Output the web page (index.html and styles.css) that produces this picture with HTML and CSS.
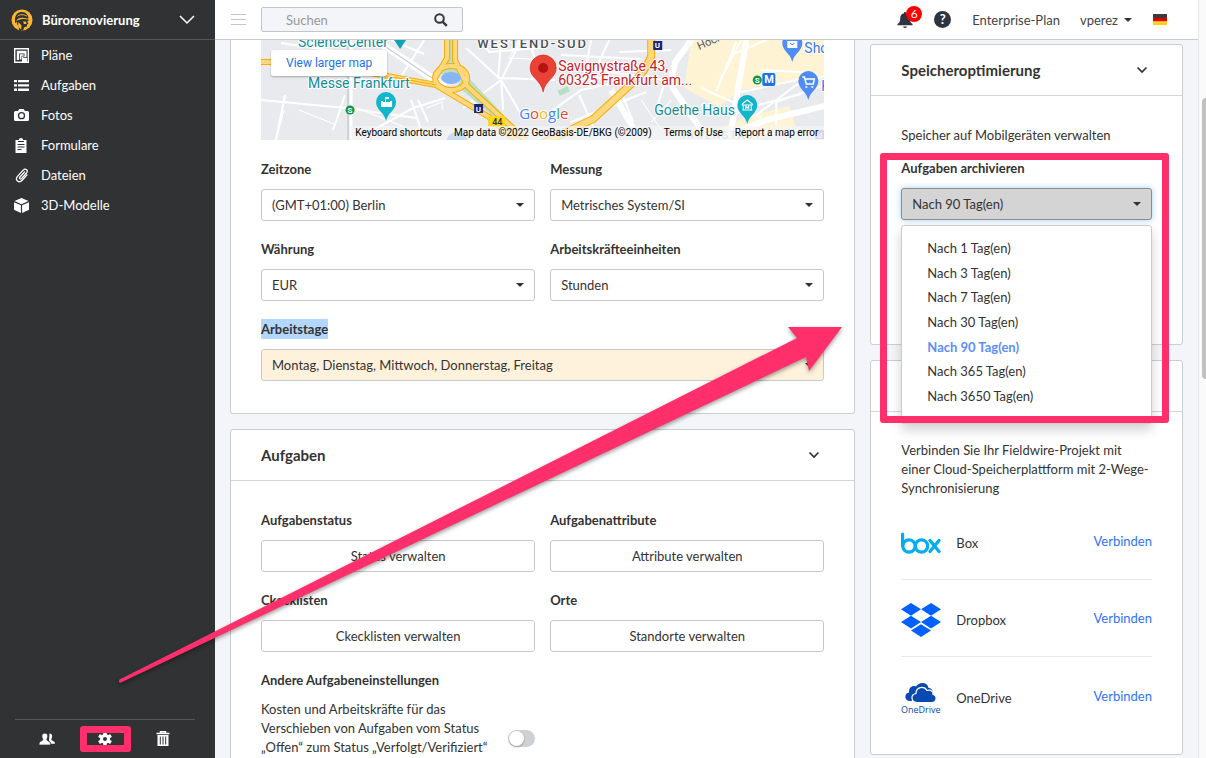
FILE: index.html
```html
<!DOCTYPE html>
<html lang="de">
<head>
  <meta charset="UTF-8" />
  <meta name="viewport" content="width=device-width, initial-scale=1.0" />
  <title>Bürorenovierung – Einstellungen</title>
  <link rel="stylesheet" href="styles.css">
</head>
<body>
  <aside class="sidebar">
    <button class="project" type="button">
      <svg width="22" height="22" viewBox="0 0 22 22"><circle cx="11" cy="11" r="10.500" fill="#fbb731"/><path d="M4 11c0-5.500 3-8 7-8s6.500 3 6.500 6.500H16C12 8 8 8.500 6 10.500l-.5 3L4 14z" fill="#313234"/><path d="M6.500 7.200C9 5.200 13 5.200 16 7.200" stroke="#fbb731" fill="none"/><path d="M6 11.500c3-1.500 7-2 11.500-1v1.500h-1.200l1 3-1.300.5v2l-2.500.5-1.500 3.500H8c.5-4-2-5-2-8z" fill="#313234"/><path d="M7.500 13l3 3.500-.3 4L7 17.500zM12 12.500h3l.5 2.500h-2.500z" fill="#fbb731"/></svg>
      <span>Bürorenovierung</span>
      <svg class="project-arrow" width="16" height="10" viewBox="0 0 16 10"><path d="M1 1l7 7 7-7" fill="none" stroke="#fff" stroke-width="1.500"/></svg>
    </button>
    <nav>
      <ul>
        <li><a href="#plaene"><svg width="15" height="15" viewBox="0 0 15 15"><path d="M.7.700h13.600v13.600H.7z" fill="none" stroke="#fff" stroke-width="1.400"/><path d="M2.800 2.800h9.700v6.400H9.200V14H8V8.500h2.500V5.500H5V12H2.800z" fill="#fff"/><path d="M5.800 6.300h3.900v1.500H7.500v3.700H5.800z" fill="#fff"/><path d="M9 10h4v4H9z" fill="#fff"/></svg>Pläne</a></li>
        <li><a href="#aufgaben"><svg width="15" height="15" viewBox="0 0 15 15"><path d="M0 2h3v2.300H0zM0 6.300h3v2.300H0zM0 10.600h3V13H0zM4 2h11v2.300H4zM4 6.300h11v2.300H4zM4 10.600h11V13H4z" fill="#fff"/></svg>Aufgaben</a></li>
        <li><a href="#fotos"><svg width="15" height="15" viewBox="0 0 15 15"><path d="M1.500 3H4l1.300-2h4.400L11 3h2.500Q15 3 15 4.500v7q0 1.500-1.500 1.500h-12Q0 13 0 11.500v-7Q0 3 1.500 3z" fill="#fff"/><circle cx="7.500" cy="7.700" r="3" fill="none" stroke="#313234" stroke-width="1.300"/></svg>Fotos</a></li>
        <li><a href="#formulare"><svg width="15" height="15" viewBox="0 0 15 15"><path d="M1.500 2h3.300Q5 0 7 0t2.200 2h3.300v13h-11z" fill="#fff"/><path d="M4 3.500h6M3.500 6.500h7M3.500 9h7M3.500 11.500h4" stroke="#313234" stroke-width="1.100"/></svg>Formulare</a></li>
        <li><a href="#dateien"><svg width="15" height="15" viewBox="0 0 15 15"><path d="M10.500 4L5.800 9.200c-1 1.200.6 2.500 1.700 1.400l5-5.600c2.200-2.700-1-5.300-3.400-2.900L3.500 8.300c-3 3.700 1.400 7.400 4.700 4l4.800-5.400" fill="none" stroke="#fff" stroke-width="1.300" stroke-linecap="round"/></svg>Dateien</a></li>
        <li><a href="#modelle"><svg width="15" height="15" viewBox="0 0 15 15"><path d="M7.500 0l7 3-7 3.200L.5 3zM0 4.200l6.900 3V15L0 11.800zM15 4.200l-6.900 3V15l6.900-3.200z" fill="#fff"/></svg>3D-Modelle</a></li>
      </ul>
    </nav>
    <div class="sidebar-tools">
      <button type="button" aria-label="Personen"><svg width="16" height="16" viewBox="0 0 16 16" fill="#fff"><path d="M10.500 2.500c3 0 3 3 2.200 4.800-.8 1.500-.3 2 .8 2.500 1.700.8 2.500 1.500 2.500 3h-4l-2-3.500z"/><path d="M5.800 2.200c3.200 0 3.300 3.200 2.300 5.200-.6 1.300-.2 1.900.8 2.400 1.900.9 2.700 1.800 2.700 4.200H0c0-2.400.8-3.300 2.700-4.200 1-.5 1.400-1.100.8-2.400-1-2-.9-5.200 2.300-5.200z" stroke="#313234" stroke-width=".7"/></svg></button>
      <button type="button" aria-label="Einstellungen"><svg width="14" height="14" viewBox="0 0 14 14"><circle cx="7" cy="7" r="3.500" fill="none" stroke="#fff" stroke-width="3"/><path d="M7 0v3.500M7 10.500V14M1 3.500l3 1.700M10 8.800l3 1.700M1 10.500l3-1.700M10 5.200l3-1.700" stroke="#fff" stroke-width="3.400"/></svg></button>
      <button type="button" aria-label="Papierkorb"><svg width="14" height="16" viewBox="0 0 14 16"><path d="M1.500 4h11v11h-11z" fill="#fff"/><path d="M.5 2.500h13M4.500 2V.8h5V2" fill="none" stroke="#fff" stroke-width="1.500"/><path d="M4.300 5.500v8M7 5.500v8M9.700 5.500v8" stroke="#313234" stroke-width="1"/></svg></button>
    </div>
  </aside>

  <div class="page">
    <header class="topbar">
      <button class="burger" type="button" aria-label="Menü"><svg width="15" height="13" viewBox="0 0 15 13"><path d="M0 1.500h15M0 6.500h15M0 11.500h15" stroke="#c4c4c4"/></svg></button>
      <form class="search">
        <input type="text" placeholder="Suchen" aria-label="Suchen" />
        <button type="submit" aria-label="Suche starten"><svg width="14" height="14" viewBox="0 0 14 14"><circle cx="5.500" cy="5.500" r="4.300" fill="none" stroke="#35373a" stroke-width="2"/><path d="M8.800 8.800l4 4" stroke="#35373a" stroke-width="2.400"/></svg></button>
      </form>
      <div class="account">
        <button class="bell" type="button" aria-label="Benachrichtigungen"><svg width="16" height="18" viewBox="0 0 16 18"><path d="M8 1c.8 0 1 .5 1 1.200 3 .6 3.800 2.700 3.800 5.300 0 3 .7 4.300 2.700 5.500v1.300H.5V13c2-1.200 2.700-2.500 2.700-5.500C3.200 4.900 4 2.800 7 2.200 7 1.500 7.200 1 8 1zM6 15.500h4Q9.500 17 8 17t-2-1.500z" fill="#2e3440"/></svg><span class="badge">6</span></button>
        <button class="help" type="button">?</button>
        <a class="plan" href="#plan">Enterprise-Plan</a>
        <button class="user" type="button">vperez</button>
        <button class="lang" type="button" aria-label="Deutsch"><svg width="14" height="11" viewBox="0 0 14 11"><path d="M0 0h14v4H0z" fill="#3b3b3b"/><path d="M0 4h14v3.500H0z" fill="#e00000"/><path d="M0 7.500h14V11H0z" fill="#fbd116"/></svg></button>
      </div>
    </header>

    <main class="content">
      <div class="column wide">
        <section class="card project-card">
          <div class="map">
            <svg class="map-tiles" viewBox="0 0 563 100" preserveAspectRatio="xMidYMid slice">
              <path d="M0 0h563v100H0z" fill="#e8eaed"/>
              <path d="M430 0h133v70l-80 10-60-32z" fill="#fef3d3"/>
              <path d="M420 95l60-45 83-14v34l-75 30z" fill="#e8eaed"/>
              <path d="M450 92l40-17 38-9 6 20-40 14h-38z" fill="#fef3d3"/>
              <g fill="none" stroke="#fff" stroke-width="2">
                <path d="M0 60l85 8 70 10M24 55L15 100M80 12L20 3M72 90l12-35M150 60l10 30M140 37L163 0M163 14L130 0M112 90l40-22 32-10M157 60l10 22"/>
                <path d="M205 8l35 32 2 30M240 0l-3 38 57 2M240 40l-38 28M240 40l22 38M240 40l20-40M270 8l14 40M220 0l8 12 50-4M285 75l35-25 55-12M300 40l90-4M300 15l80 4M330 0l-8 40M348 0l-14 30 70 10M358 12l52-2M310 82l75-30M375 38l-15 14 12 30M405 38l-8 25M318 55l20 45"/>
                <path d="M440 65l60 12M440 48l45 20 55-14M470 15l35-15M455 52l20-50M500 30l55 3M480 52l70-15M495 75l40-30 28-9M515 85V62l48-17M480 0l-22 42"/>
              </g>
              <g fill="none" stroke="#fff">
                <path d="M96 68l70 28M38 70l35 14M15 100l8-30M165 68l16-6v8"/>
                <path d="M210 60l25 20M190 40l20-8M258 0l-10 18 42 2M380 60l20 30M410 60l-20 22"/>
              </g>
              <path d="M90 0v100" stroke="#fff" stroke-width="3"/><path d="M87 0v100" stroke="#d0d3d6" stroke-width="2"/>
              <path d="M122 5l62 42" stroke="#fff" stroke-width="7"/><path d="M122 5l62 42" stroke="#c9cccf" stroke-width="1"/>
              <path d="M430 0l-16 22-5 22 35 52M485 0l-16 95M455 100l50-20 58-14M350 50l22 38" fill="none" stroke="#fff" stroke-width="6"/>
              <path d="M196 46l38 32 24 22 4-4-58-62z" fill="#b7dfc4"/>
              <path d="M186 0v22l-8 12h28L194 22V0z" fill="#b7dfc4"/>
              <g fill="none" stroke="#f9ab00" stroke-width="6">
                <path d="M0 22h20M110 33l65 12 3 2 50 30 26 23M186 0v18l-12 20M194 0v20l12 26 50 46 8 8"/>
                <path d="M390 0v16q-7 18-20 28l-38 35-50 24" stroke-width="8"/>
                <ellipse cx="190" cy="38" rx="16" ry="12"/>
              </g>
              <g fill="none" stroke="#fdd87d" stroke-width="4">
                <path d="M0 22h20M110 33l65 12 3 2 50 30 26 23M186 0v18l-12 20M194 0v20l12 26 50 46 8 8"/>
                <path d="M390 0v16q-7 18-20 28l-38 35-50 24" stroke-width="6"/>
                <ellipse cx="190" cy="38" rx="16" ry="12"/>
              </g>
              <path d="M110 33l65 12" stroke="#f9ab00"/>
              <ellipse cx="190" cy="38" rx="10" ry="6" fill="#8ab4f8"/>
              <path d="M297 51l9-4 2 4-9 4z" fill="#b7dfc4" stroke="#b7dfc4"/>
              <circle cx="196" cy="103" r="11" fill="#669df6"/>
              <g class="map-name teal">
                <text x="37" y="7">ScienceCenter</text>
                <text x="47" y="48">Messe Frankfurt</text>
                <text x="393" y="75">Goethe Haus</text>
              </g>
              <text class="district" x="216" y="8">WESTEND-SÜD</text>
              <text class="district faint" x="421" y="99">INNENSTADT</text>
              <text class="street" x="438" y="10" transform="rotate(-24 438 10)">Hochs</text>
              <g class="map-name blue"><text x="543" y="13">Sho</text><text x="560" y="51">K</text></g>
              <path d="M133 0h12l-6 9z" fill="#12a4b5"/>
              <path d="M125 81c-2-9-10-11-10-19a10 10 0 0 1 20 0c0 8-8 10-10 19z" fill="#12b5cb"/><path d="M120 67v-6h2v1h2v-5h4v2h-3v3h4v-1h2v6z" fill="#fff"/>
              <path d="M486 84c-2-9-10-11-10-19a10 10 0 0 1 20 0c0 8-8 10-10 19z" fill="#12b5cb"/><path d="M481 64l5-4 5 4v1h-10zM481 70h10M482 65v5M490 65v5M484.500 69v-3l1.500 2 1.500-2v3" stroke="#fff" fill="none"/>
              <path d="M531 22c-2-9-10-11-10-19a10 10 0 0 1 20 0c0 8-8 10-10 19z" fill="#4f8df5"/><path d="M526 1h10v7h-10z" fill="#fff"/><path d="M529 3q2 3 4 0" fill="none" stroke="#4f8df5"/>
              <path d="M547 60c-2-9-10-11-10-19a10 10 0 0 1 20 0c0 8-8 10-10 19z" fill="#4f8df5"/><path d="M541 37h2l2 7h7l1-5h-9" fill="none" stroke="#fff" stroke-width="1.500"/><circle cx="545" cy="47" r="1" fill="#fff"/><circle cx="551" cy="47" r="1" fill="#fff"/>
              <path d="M282 52c-2-12-13-14-13-24a13 13 0 0 1 26 0c0 10-11 12-13 24z" fill="#ea4335" stroke="#c5221f" stroke-width=".6"/><circle cx="282" cy="28" r="5" fill="#b31412"/>
              <g class="map-name red"><text x="297" y="31">Savignystraße 43,</text><text x="297" y="45">60325 Frankfurt am...</text></g>
              <g class="transit">
                <circle cx="89" cy="70" r="4.500" fill="#0f9648"/><text x="86.500" y="73">S</text>
                <circle cx="496" cy="40" r="4.500" fill="#0f9648"/><text x="493.500" y="43">S</text>
                <path d="M213 64h9v9h-9zM392 1h9v9h-9z" fill="#1a237e"/><text x="214.500" y="71.500">U</text><text x="393.500" y="8.500">U</text>
                <rect x="501" y="33" width="13" height="13" rx="2" fill="#1a73e8"/><text class="metro" x="503" y="43.500">M</text>
                <path d="M554 90h9v9h-9z" fill="#8f8bc9"/><text x="555.500" y="97.500">U</text>
              </g>
              <path d="M227 76h17v11h-17z" fill="#f9d71c"/><text class="route" x="231" y="85">44</text>
              <text class="google" x="258" y="79"><tspan fill="#4285f4">G</tspan><tspan fill="#ea4335">o</tspan><tspan fill="#fbbc04">o</tspan><tspan fill="#4285f4">g</tspan><tspan fill="#34a853">l</tspan><tspan fill="#ea4335">e</tspan></text>
            </svg>
            <a class="map-larger" href="#map">View larger map</a>
            <div class="map-legal">
              <button type="button">Keyboard shortcuts</button>
              <span>Map data ©2022 GeoBasis-DE/BKG (©2009)</span>
              <a href="#terms">Terms of Use</a>
              <a href="#report">Report a map error</a>
            </div>
          </div>
          <div class="fields">
            <div class="field">
              <label for="zeitzone">Zeitzone</label>
              <div class="select"><select id="zeitzone"><option>(GMT+01:00) Berlin</option></select></div>
            </div>
            <div class="field">
              <label for="messung">Messung</label>
              <div class="select"><select id="messung"><option>Metrisches System/SI</option></select></div>
            </div>
            <div class="field">
              <label for="waehrung">Währung</label>
              <div class="select"><select id="waehrung"><option>EUR</option></select></div>
            </div>
            <div class="field">
              <label for="einheiten">Arbeitskräfteeinheiten</label>
              <div class="select"><select id="einheiten"><option>Stunden</option></select></div>
            </div>
            <div class="field full">
              <label for="arbeitstage"><mark>Arbeitstage</mark></label>
              <div class="select"><select id="arbeitstage" class="changed"><option>Montag, Dienstag, Mittwoch, Donnerstag, Freitag</option></select></div>
            </div>
          </div>
        </section>

        <section class="card">
          <div class="card-head">
            <h2>Aufgaben</h2>
            <svg width="12" height="8" viewBox="0 0 12 8"><path d="M1.500 1.500L6 6l4.500-4.500" fill="none" stroke="#333" stroke-width="1.700"/></svg>
          </div>
          <div class="card-body">
            <div class="fields">
              <div class="field"><h3>Aufgabenstatus</h3><button class="btn" type="button">Status verwalten</button></div>
              <div class="field"><h3>Aufgabenattribute</h3><button class="btn" type="button">Attribute verwalten</button></div>
              <div class="field"><h3>Ckecklisten</h3><button class="btn" type="button">Ckecklisten verwalten</button></div>
              <div class="field"><h3>Orte</h3><button class="btn" type="button">Standorte verwalten</button></div>
              <div class="field">
                <h3>Andere Aufgabeneinstellungen</h3>
                <div class="toggle-row">
                  <label for="kosten">Kosten und Arbeitskräfte für das Verschieben von Aufgaben vom Status „Offen“ zum Status „Verfolgt/Verifiziert“</label>
                  <input class="toggle" type="checkbox" id="kosten" />
                </div>
              </div>
            </div>
          </div>
        </section>
      </div>

      <div class="column narrow">
        <section class="card storage">
          <div class="card-head">
            <h2>Speicheroptimierung</h2>
            <svg width="12" height="8" viewBox="0 0 12 8"><path d="M1.500 1.500L6 6l4.500-4.500" fill="none" stroke="#333" stroke-width="1.700"/></svg>
          </div>
          <div class="card-body">
            <p class="intro">Speicher auf Mobilgeräten verwalten</p>
            <h3 id="archiv">Aufgaben archivieren</h3>
            <div class="dropdown">
              <button class="dropdown-toggle" type="button" aria-describedby="archiv">Nach 90 Tag(en)</button>
              <ul class="dropdown-menu">
                <li><a href="#1">Nach 1 Tag(en)</a></li>
                <li><a href="#3">Nach 3 Tag(en)</a></li>
                <li><a href="#7">Nach 7 Tag(en)</a></li>
                <li><a href="#30">Nach 30 Tag(en)</a></li>
                <li><a href="#90" class="active">Nach 90 Tag(en)</a></li>
                <li><a href="#365">Nach 365 Tag(en)</a></li>
                <li><a href="#3650">Nach 3650 Tag(en)</a></li>
              </ul>
            </div>
            <div class="select second"><select aria-labelledby="archiv"></select></div>
          </div>
        </section>

        <section class="card">
          <div class="card-head"></div>
          <div class="card-body cloud">
            <p>Verbinden Sie Ihr Fieldwire-Projekt mit einer Cloud-Speicherplattform mit 2-Wege-Synchronisierung</p>
            <ul class="services">
              <li>
                <svg width="40" height="34" viewBox="0 0 40 34"><g fill="none" stroke="#00aeef" stroke-width="3.200" stroke-linecap="round"><path d="M1.600 8v12"/><circle cx="8" cy="20" r="6.200"/><circle cx="20.500" cy="20" r="6.200"/><path d="M29 14.500l9 11M38 14.500l-9 11"/></g></svg>
                <span>Box</span><a href="#box">Verbinden</a>
              </li>
              <li>
                <svg width="40" height="34" viewBox="0 0 40 34" fill="#0061ff"><path d="M10 0l10 6.300-10 6.400L0 6.300zM30 0l10 6.300-10 6.400-10-6.400zM10 12.700L20 19l-10 6.400L0 19zM30 12.700L40 19l-10 6.400L20 19zM20 21.300l10 6.300L20 34l-10-6.400z"/></svg>
                <span>Dropbox</span><a href="#dropbox">Verbinden</a>
              </li>
              <li>
                <svg width="40" height="34" viewBox="0 0 40 34"><path d="M9 20c-6 0-6-8-1-8.500C7.500 6 12 4 15 5.500 18 0 27 1 27.500 7c5 0 5 6 5 13z" fill="#094ab2"/><path d="M16 21.500c-6 0-7-8-1-9C15 6 23 4.500 26 9.500c4-1.500 6.500 1.500 6 4 4.500 1 4 8-1 8z" fill="#094ab2" stroke="#fff" stroke-width="1.200"/><text class="onedrive" x="0" y="32" fill="#094ab2">OneDrive</text></svg>
                <span>OneDrive</span><a href="#onedrive">Verbinden</a>
              </li>
            </ul>
          </div>
        </section>
      </div>
    </main>
  </div>

  <div class="scrollbar"><div class="thumb"></div></div>

  <!-- Markierungen -->
  <svg class="arrow" width="726" height="362" viewBox="0 0 726 362"><path d="M2.500 354.500L680 13l-9-11h54l-33 44-3-14L4 357.500q-3 .5-1.500-3z" fill="#ff2f6c"/></svg>
  <div class="marker marker-archive"></div>
  <div class="marker marker-settings"></div>
</body>
</html>
```
FILE: styles.css
```css
* { margin: 0; padding: 0; box-sizing: border-box; }
body { position: relative; display: flex; height: 100vh; overflow: hidden; font-family: Lato, sans-serif; font-size: 13px; line-height: 20px; color: #333; background: #f4f5f8; }
button, input, select { font: inherit; color: inherit; }
button { background: none; border: none; cursor: pointer; }
a { color: inherit; text-decoration: none; }
ul { list-style: none; }
svg { display: block; flex: none; }

.sidebar { display: flex; flex-direction: column; width: 215px; flex: none; background: #313234; color: #fff; }
.project { display: flex; align-items: center; gap: 9px; height: 40px; padding: 0 20px 0 11px; border-bottom: 1px solid #57585a; font-weight: bold; }
.project-arrow { margin-left: auto; }
.sidebar nav a { display: flex; align-items: center; gap: 12px; height: 30px; padding-left: 14px; }
.sidebar-tools { display: flex; justify-content: center; align-items: center; height: 39px; margin: auto 20px 0 15px; border-top: 1px solid #57585a; }
.sidebar-tools button { display: flex; justify-content: center; width: 58px; }

.page { display: flex; flex-direction: column; flex: 1; min-width: 0; }
.topbar { display: flex; align-items: center; height: 40px; flex: none; padding: 0 31px 0 16px; background: #fff; border-bottom: 1px solid #c9cacc; }
.burger { margin-right: 15px; }
.search { display: flex; align-items: center; width: 202px; height: 25px; padding: 0 14px 0 24px; background: #f4f5f8; border: 1px solid #c4c5c8; border-radius: 2px; }
.search input { flex: 1; min-width: 0; background: none; border: none; outline: none; }
.search input::placeholder { color: #999; }
.account { display: flex; align-items: center; margin-left: auto; color: #444; }
.bell { position: relative; margin-right: 21px; }
.badge { position: absolute; top: -5px; left: 9px; width: 16px; height: 16px; border-radius: 50%; background: #f00; color: #fff; font-size: 12px; line-height: 16px; text-align: center; }
.help { width: 17px; height: 17px; margin-right: 21px; border-radius: 50%; background: #2e3440; color: #fff; font-weight: bold; line-height: 17px; }
.plan { margin-right: 20px; }
.user { display: flex; align-items: center; gap: 6px; margin-right: 21px; }
.user::after, .select::after, .dropdown-toggle::after { content: ""; border: 4px solid transparent; border-top-color: #333; border-bottom: none; }

.content { display: flex; flex: 1; gap: 15px; padding: 0 15px; overflow: hidden; }
.column { display: flex; flex-direction: column; gap: 15px; min-width: 0; }
.wide { flex: 2; }
.narrow { flex: 1; padding-top: 4px; }
.card { flex: none; background: #fff; border: 1px solid #cccdd3; border-radius: 3px; }
.card-head { display: flex; justify-content: space-between; align-items: center; height: 51px; padding: 0 34px 0 30px; border-bottom: 1px solid #d4d5d8; }
.card-body { padding: 29px 30px; }
h2 { font-size: 15px; }
h3, .field > label { display: block; font-size: 13px; font-weight: bold; line-height: 20px; margin-bottom: 10px; }
mark { padding: 2px 0; background: #b3d7fe; color: inherit; }

.project-card { padding: 0 30px 32px; border-top: none; border-radius: 0 0 3px 3px; }
.fields { display: grid; grid-template-columns: 1fr 1fr; gap: 18px 15px; }
.project-card .fields { padding-top: 19px; }
.full { grid-column: 1 / -1; }
.select { position: relative; }
.select::after { position: absolute; top: 14px; right: 11px; }
select, .btn, .dropdown-toggle { width: 100%; height: 32px; padding: 0 10px; background: #fff; border: 1px solid #c8c9cd; border-radius: 3px; }
select { display: block; appearance: none; }
.changed { background: #fff2dc; }
.toggle-row { display: flex; align-items: center; gap: 20px; line-height: 19px; }
.toggle-row label { flex: 1; }
.toggle { appearance: none; width: 27px; height: 17px; margin-top: 20px; border-radius: 9px; background: #cfd0d6; }
.toggle::before { content: ""; display: block; width: 15px; height: 15px; margin: 1px; border-radius: 50%; background: #fff; box-shadow: 0 1px 2px rgba(0,0,0,0.3); }

.map { position: relative; height: 100px; overflow: hidden; font-family: Roboto, sans-serif; }
.map-tiles { width: 100%; height: 100px; }
.map-name text { font-size: 14px; stroke: #fff; stroke-width: 2px; paint-order: stroke; }
.teal { fill: #128c98; }
.blue { fill: #3b78e7; }
.red { fill: #c5221f; }
.district { font-size: 13px; font-weight: 500; letter-spacing: 2px; fill: #4b5055; stroke: #fff; stroke-width: 2px; paint-order: stroke; }
.faint { font-size: 10px; fill: #b8babe; }
.street { font-size: 11px; fill: #555; }
.transit { font-size: 8px; font-weight: bold; fill: #fff; }
.metro { font-size: 11px; }
.route { font-size: 9px; font-weight: 500; fill: #333; }
.google { font-family: "Open Sans", sans-serif; font-size: 15px; font-weight: 500; stroke: #fff; stroke-width: 2px; paint-order: stroke; }
.map-larger { position: absolute; top: 10px; left: 10px; padding: 0 15px; background: #fff; border-radius: 2px; box-shadow: 0 1px 2px rgba(0,0,0,0.3); color: #1a73e8; font-size: 12px; line-height: 26px; }
.map-legal { position: absolute; right: 0; bottom: 0; display: flex; gap: 12px; padding: 0 6px 0 5px; background: rgba(245,245,245,0.7); color: #000; font-size: 10px; line-height: 14px; white-space: nowrap; }

.storage { height: 301px; }
.intro { margin-bottom: 13px; }
.dropdown { position: relative; }
.dropdown-toggle { display: flex; justify-content: space-between; align-items: center; background: #d4d4d4; border-color: #8c8c8c; box-shadow: 0 0 6px rgba(102,175,233,0.6); }
.dropdown-menu { position: absolute; top: 37px; left: 0; right: 0; z-index: 2; padding: 10px 25px 14px; background: #fff; border: 1px solid #ccc; border-radius: 3px; box-shadow: 0 6px 12px rgba(0,0,0,0.18); line-height: 1.9; }
.dropdown-menu a { display: block; }
.dropdown-menu .active { color: #5b8ff9; font-weight: bold; }
.second { margin-top: 62px; }

.cloud { padding-bottom: 20px; }
.cloud p { line-height: 19px; }
.services { margin-top: 5px; }
.services li { display: flex; align-items: center; gap: 15px; height: 77px; padding-top: 4px; border-bottom: 1px solid #e8e8e8; }
.services li:last-child { border: none; }
.services a { margin: 0 0 4px auto; color: #2f73f6; }
.onedrive { font-family: "Open Sans", sans-serif; font-size: 9px; }

.scrollbar { width: 8px; flex: none; padding: 98px 0 0 3px; background: #fafafa; border-left: 1px solid #e4e4e4; }
.thumb { height: 281px; border-radius: 4px 0 0 4px; background: #c1c1c1; }

.arrow { position: absolute; top: 325px; left: 117px; z-index: 3; filter: drop-shadow(0 2px 2px rgba(0,0,0,0.4)); pointer-events: none; }
.marker { position: absolute; z-index: 3; border: 7px solid #ff2f6c; border-radius: 3px; pointer-events: none; }
.marker-archive { top: 153px; left: 880px; width: 289px; height: 270px; }
.marker-settings { top: 726px; left: 80px; width: 51px; height: 26px; }
```
